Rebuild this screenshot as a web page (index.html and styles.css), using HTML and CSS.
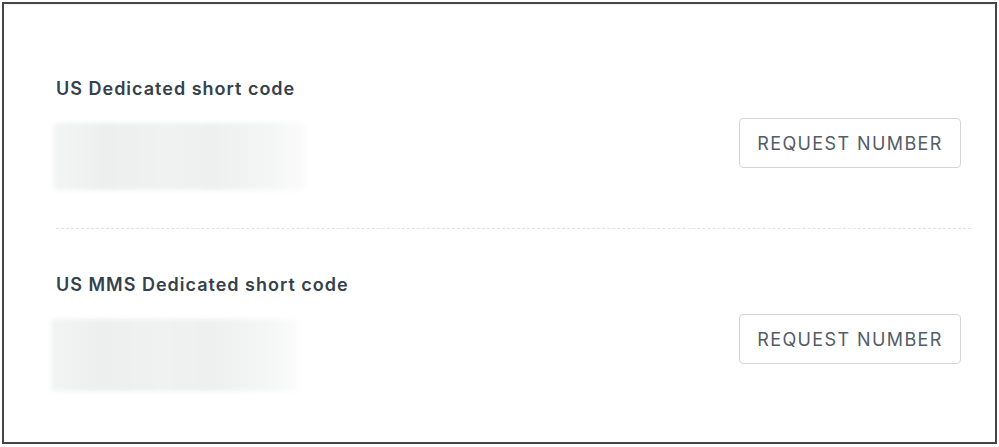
FILE: index.html
```html
<!DOCTYPE html>
<html lang="en">
<head>
<meta charset="utf-8">
<title>Short codes</title>
<link rel="stylesheet" href="styles.css">
</head>
<body>
<div class="frame">
  <section class="section section--first">
    <h2 class="heading">US Dedicated short code</h2>
    <div class="row">
      <div class="blur"></div>
      <button class="btn" type="button">REQUEST NUMBER</button>
    </div>
  </section>
  <section class="section section--second">
    <h2 class="heading">US MMS Dedicated short code</h2>
    <div class="row">
      <div class="blur blur--shift"></div>
      <button class="btn" type="button">REQUEST NUMBER</button>
    </div>
  </section>
</div>
</body>
</html>
```
FILE: styles.css
```css
* { box-sizing: border-box; }
html, body { margin: 0; padding: 0; background: #ffffff; }
body { font-family: Inter, "Liberation Sans", Arial, sans-serif; }

.frame {
  margin: 2px 0 0 2px;
  width: 995px;
  height: 442px;
  border: 2px solid #454545;
  padding: 0 24px 0 52px;
  background: #fff;
  box-shadow: inset 0 2px 2px -1px #efefef;
}

.section--first { padding: 73px 0 38px; border-bottom: 1px dashed #e2e2e2; }
.section--second { padding: 44px 0 0; }

.heading {
  margin: 0;
  font-size: 18px;
  line-height: 24px;
  font-weight: 600;
  color: #35414b;
  letter-spacing: 1px;
}

.row {
  display: flex;
  justify-content: space-between;
  align-items: flex-start;
  margin-top: 17px;
  padding-right: 10px;
}

.blur {
  margin-top: 5px;
  margin-left: -2px;
  width: 251px;
  height: 67px;
  background: linear-gradient(90deg, #f3f4f4 0%, #edeeee 20%, #f0f1f1 45%, #eeefef 65%, #f4f5f5 85%, #fbfbfb 100%);
  filter: blur(2px);
}
.blur--shift { margin-left: -5px; width: 247px; height: 72px; }

.btn {
  width: 222px;
  height: 50px;
  border: 1px solid #d3d6d9;
  border-radius: 4px;
  background: #fff;
  font-family: Inter, "Liberation Sans", Arial, sans-serif;
  font-size: 18px;
  font-weight: 400;
  color: #535d66;
  padding: 0;
  letter-spacing: 1.4px;
}
```
